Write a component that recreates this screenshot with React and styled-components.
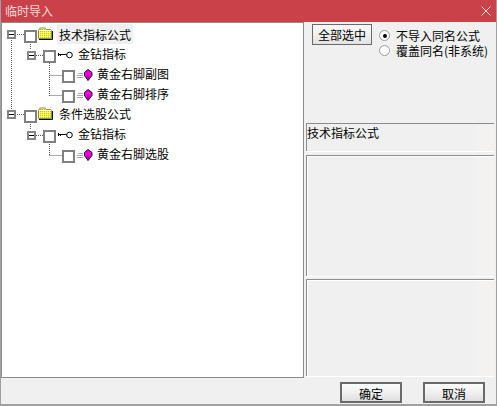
import React from "react";
import styled, { createGlobalStyle } from "styled-components";

const GlobalStyle = createGlobalStyle`
  html, body { margin: 0; padding: 0; background: #f0f0f0; }
  #root { width: 497px; height: 406px; }
`;

const Dialog = styled.div`
  width: 497px;
  height: 406px;
  box-sizing: border-box;
  display: flex;
  flex-direction: column;
  background: #f0f0f0;
  border: solid #a0a0a0;
  border-width: 0 1px 2px 1px;
  overflow: hidden;
  font-family: "Noto Sans CJK SC", "Liberation Sans", sans-serif;
  font-size: 12px;
  color: #000;
`;

const TitleBar = styled.div`
  height: 22px;
  margin: 0 -1px;
  padding: 0 6px 0 5px;
  flex: none;
  display: flex;
  align-items: center;
  justify-content: space-between;
  background: #c94149;
  color: #f4d9da;
  line-height: 22px;
`;

const Body = styled.div`
  height: 356px;
  flex: none;
  display: flex;
`;

const TreePanel = styled.div`
  position: relative;
  width: 303px;
  height: 356px;
  flex: none;
  box-sizing: border-box;
  padding-top: 3px;
  background: #fff;
  border: 1px solid #8c8c8c;
`;

const Connectors = styled.svg`
  position: absolute;
  left: -2px;
  top: -23px;
  pointer-events: none;
`;

const Row = styled.div`
  position: relative;
  height: 20px;
  display: flex;
  align-items: center;
  padding-left: ${(p) => 22 + p.$level * 19}px;
`;

const Check = styled.span`
  flex: none;
  width: 9px;
  height: 9px;
  background: #fff;
  border: 2px solid #808080;
`;

const Expander = styled.span`
  position: absolute;
  left: ${(p) => 5 + p.$level * 20}px;
  top: ${(p) => 4 + p.$level}px;
  width: 5px;
  height: 5px;
  border: 2px solid #858585;
  background: #fff;
  display: flex;
  align-items: center;
  justify-content: center;
  &::after {
    content: "";
    width: 5px;
    height: 1px;
    flex: none;
    background: #000;
  }
`;

const Label = styled.span`
  margin: 0 0 4px ${(p) => p.$gap}px;
  padding: 0 2px;
  height: 20px;
  line-height: ${(p) => (p.$selected ? 21 : 19)}px;
  white-space: nowrap;
  background: ${(p) => (p.$selected ? "#f0f0f0" : "transparent")};
`;

const FolderIcon = styled.svg`
  flex: none;
  margin: -5px 0 0 1px;
`;

const KeyIcon = styled.svg`
  flex: none;
  margin: -2px 0 0 2px;
`;

const GemIcon = styled.svg`
  flex: none;
  margin: -1px 0 0 2px;
`;

const Side = styled.div`
  flex: 1;
  min-width: 0;
  display: flex;
  flex-direction: column;
  padding: 2px 2px 0 2px;
`;

const Controls = styled.div`
  height: 99px;
  flex: none;
  display: flex;
  align-items: flex-start;
  padding-left: 6px;
`;

const Button = styled.button`
  box-sizing: border-box;
  width: ${(p) => p.$width}px;
  height: 21px;
  padding: 0;
  border: ${(p) => (p.$thick ? 2 : 1)}px solid #6a6a6a;
  background: ${(p) =>
    p.$thick
      ? "linear-gradient(#fbfbfb, #f0f0f0 50%, #dedede)"
      : "linear-gradient(#f8f8f8, #f0f0f0 50%, #e2e2e2)"};
  font: inherit;
  color: #000;
  line-height: 19px;
`;

const Radios = styled.div`
  margin-left: 7px;
  padding-top: 4px;
  display: flex;
  flex-direction: column;
`;

const RadioRow = styled.div`
  height: 15px;
  display: flex;
  align-items: center;
  line-height: 15px;
  white-space: nowrap;
`;

const RadioDot = styled.span`
  box-sizing: border-box;
  width: 11px;
  height: 11px;
  flex: none;
  margin-right: 6px;
  border-radius: 50%;
  background: #fff;
  border: 1px solid #9a9a9a;
  display: flex;
  align-items: center;
  justify-content: center;
  &::after {
    content: "";
    width: 4px;
    height: 4px;
    border-radius: 50%;
    background: ${(p) => (p.$checked ? "#000" : "transparent")};
  }
`;

const Group = styled.div`
  box-sizing: border-box;
  height: ${(p) => p.$height}px;
  flex: none;
  margin-bottom: ${(p) => p.$gap}px;
  line-height: 17px;
  border-top: 1px solid #8c8c8c;
  border-left: 1px solid #8c8c8c;
  background: linear-gradient(90deg, #f0f0f0 169px, #f3f2f0 169px);
  box-shadow: inset 1px 1px 0 ${(p) => (p.$flat ? "#f0f0f0" : "#fff")}, 0 1px 0 #fff;
`;

const Footer = styled.div`
  flex: 1;
  display: flex;
  justify-content: flex-end;
  align-items: flex-start;
  gap: 21px;
  padding: 4px 11px 0 0;
`;

const Folder = () => (
  <FolderIcon width="15" height="13" viewBox="0 0 15 13">
    <defs>
      <pattern id="dither" width="2" height="2" patternUnits="userSpaceOnUse">
        <rect width="2" height="2" fill="#f6f64a" />
        <rect width="1" height="1" fill="#c8c800" />
        <rect x="1" y="1" width="1" height="1" fill="#fdfd9a" />
      </pattern>
    </defs>
    <path d="M0.500 11.500V3.500L2 1H7L8.500 2.500H12.500L13.500 4V11.500Z" fill="url(#dither)" stroke="#8a8a60" />
    <path d="M1 3.500H13" stroke="#fff" />
    <path d="M1 12.500H14.500V4" stroke="#111" fill="none" />
  </FolderIcon>
);

const Key = () => (
  <KeyIcon width="15" height="8" viewBox="0 0 15 8">
    <path d="M0.500 2V5M2.500 3V5M0 3.500H9" stroke="#000" fill="none" />
    <circle cx="11.500" cy="4" r="2.800" fill="#fff" stroke="#000" />
  </KeyIcon>
);

const Gem = () => (
  <GemIcon width="16" height="13" viewBox="0 0 16 13">
    <path d="M1 4.500H6M0 6.500H6M0 8.500H6" stroke="#a8a8a8" />
    <path d="M11 0.500L15 3.500V6.500L11 11.500L7.500 6.500V3.500Z" fill="#f400e0" stroke="#1c0024" />
    <path d="M11 5.500V11" stroke="#70007a" fill="none" />
  </GemIcon>
);

const ConnectorLines = () => (
  <Connectors width="303" height="380">
    <path
      d="M11.500 40V110M17 34.500H24M30.500 44V50M36 55.500H43M49.500 63V96M49.500 75.500H62M49.500 95.500H62M17 114.500H24M30.500 124V130M36 135.500H43M49.500 144V156M49.500 155.500H62"
      stroke="#555"
      strokeDasharray="1 1"
      fill="none"
    />
  </Connectors>
);

const tree = [
  { id: 1, level: 0, icon: Folder, text: "技术指标公式", gap: 4, expander: true, selected: true },
  { id: 2, level: 1, icon: Key, text: "金钻指标", gap: 3, expander: true },
  { id: 3, level: 2, icon: Gem, text: "黄金右脚副图", gap: 2 },
  { id: 4, level: 2, icon: Gem, text: "黄金右脚排序", gap: 2 },
  { id: 5, level: 0, icon: Folder, text: "条件选股公式", gap: 4, expander: true },
  { id: 6, level: 1, icon: Key, text: "金钻指标", gap: 3, expander: true },
  { id: 7, level: 2, icon: Gem, text: "黄金右脚选股", gap: 2 },
];

export default function App() {
  return (
    <>
      <GlobalStyle />
      <Dialog>
        <TitleBar>
          <span>临时导入</span>
          <svg width="10" height="10" viewBox="0 0 10 10">
            <path d="M0.500 0.500L9.500 9.500M9.500 0.500L0.500 9.500" stroke="#f4d9da" fill="none" />
          </svg>
        </TitleBar>
        <Body>
          <TreePanel>
            <ConnectorLines />
            {tree.map((node) => {
              const Icon = node.icon;
              return (
                <Row key={node.id} $level={node.level}>
                  {node.expander && <Expander $level={node.level} />}
                  <Check />
                  <Icon />
                  <Label $gap={node.gap} $selected={node.selected}>
                    {node.text}
                  </Label>
                </Row>
              );
            })}
          </TreePanel>
          <Side>
            <Controls>
              <Button $width={60}>全部选中</Button>
              <Radios>
                <RadioRow>
                  <RadioDot $checked />
                  不导入同名公式
                </RadioRow>
                <RadioRow>
                  <RadioDot />
                  覆盖同名(非系统)
                </RadioRow>
              </Radios>
            </Controls>
            <Group $height={28} $gap={4} $flat>技术指标公式</Group>
            <Group $height={121} $gap={3} />
            <Group $height={97} $gap={0} />
          </Side>
        </Body>
        <Footer>
          <Button $width={62} $thick>确定</Button>
          <Button $width={62} $thick>取消</Button>
        </Footer>
      </Dialog>
    </>
  );
}
